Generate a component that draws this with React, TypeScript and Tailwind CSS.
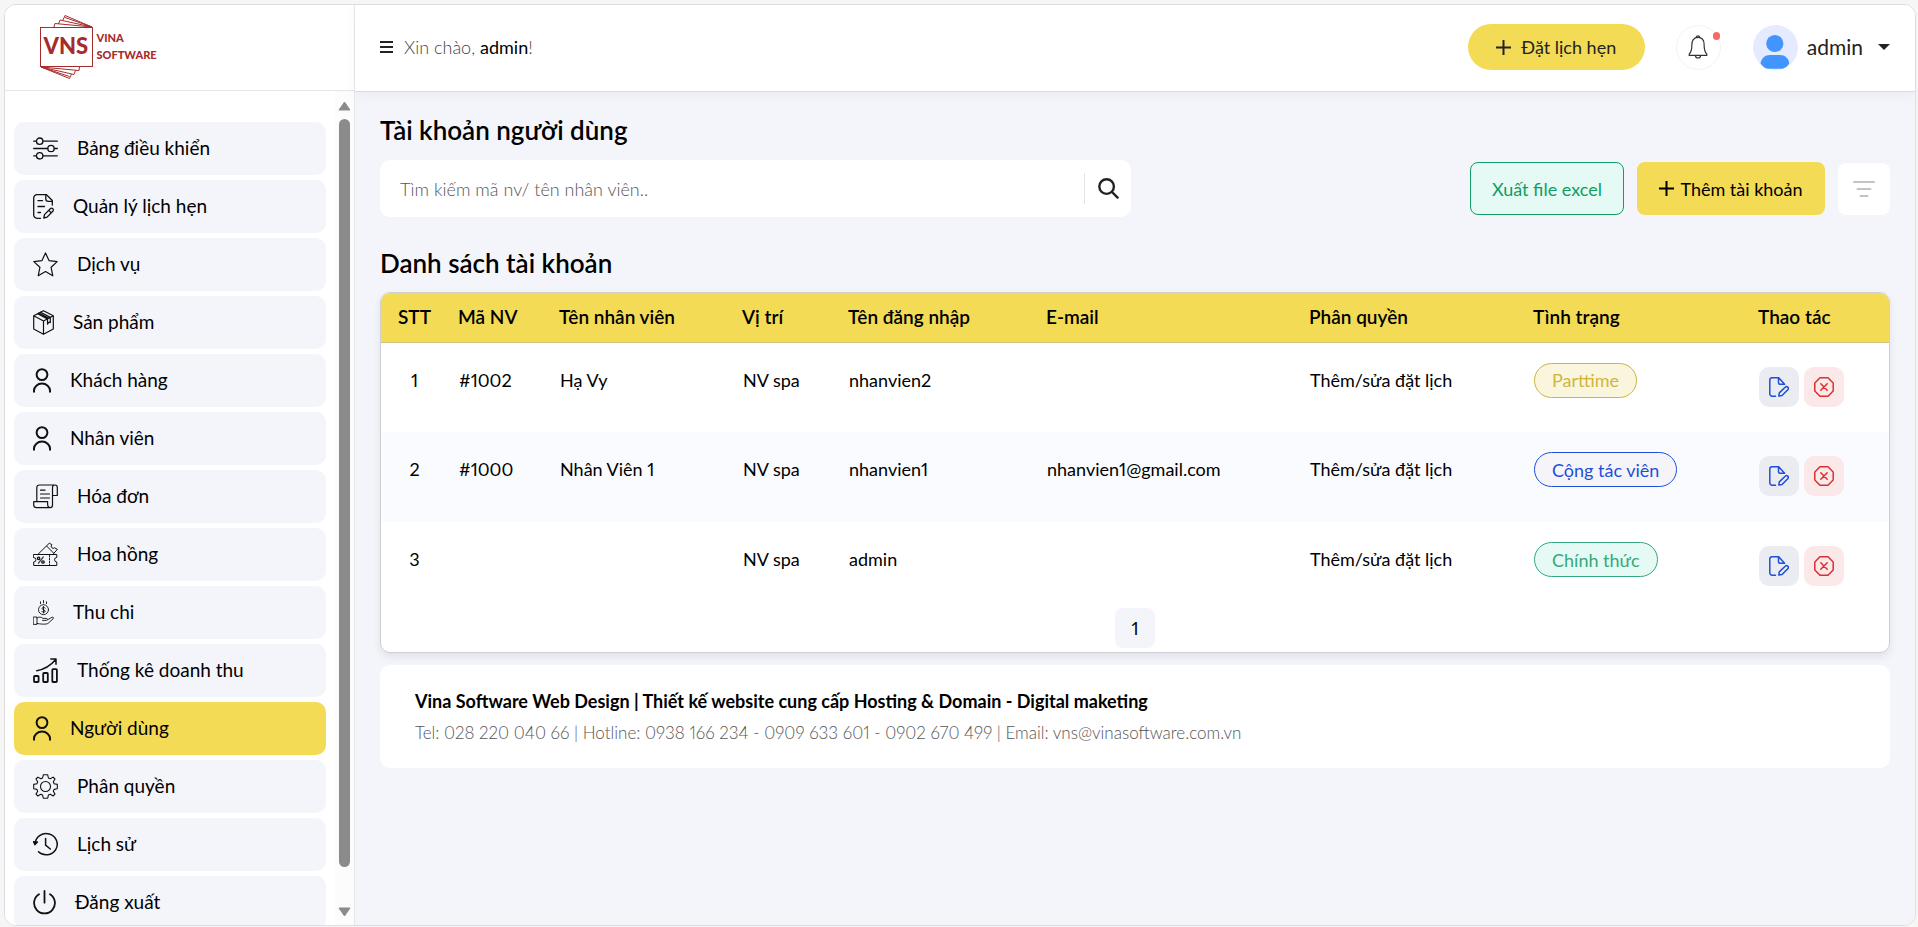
import type { ReactNode } from "react";
import clsx from "clsx";

function Icon({
  w = 25,
  stroke = 1.2,
  children,
}: {
  w?: number;
  stroke?: number;
  children: ReactNode;
}) {
  return (
    <svg
      width={w}
      height={25}
      viewBox={`0 0 ${w} 25`}
      fill="none"
      stroke="#111"
      strokeWidth={stroke}
      strokeLinecap="round"
      strokeLinejoin="round"
      className="shrink-0"
      aria-hidden="true"
    >
      {children}
    </svg>
  );
}

const SlidersIcon = () => (
  <Icon stroke={1.3}>
    <path d="M.7 5.2H3.4M10 5.2H24.3M.7 12.5H14.7M21.3 12.5H24.3M.7 19.8H3.4M10 19.8H24.3" />
    <circle cx="6.7" cy="5.2" r="3.2" />
    <circle cx="18" cy="12.5" r="3.2" />
    <circle cx="6.7" cy="19.8" r="3.2" />
  </Icon>
);

const NoteIcon = () => (
  <Icon w={21} stroke={1.3}>
    <path d="M7.5 24.3H4A3.3 3.3 0 0 1 .7 21V4A3.3 3.3 0 0 1 4 .7H13.5L19.3 6.5V11" />
    <path d="M12.8 .9V5A2.4 2.4 0 0 0 15.2 7.4H19.2" />
    <path d="M5 6.7H9.5M5 12.5H11.5M5 18.5H7.5" />
    <path d="M10.8 24L11.5 20.6L17.3 14.8A1.7 1.7 0 0 1 19.8 17.3L14.1 23.1Z M15.8 16.4L18.2 18.8" />
  </Icon>
);

const StarIcon = () => (
  <Icon>
    <path d="M12.5 .9L16 8.6L24.2 9.6L18.1 15.3L19.8 23.8L12.5 19.6L5.2 23.8L6.9 15.3L.8 9.6L9 8.6Z" />
  </Icon>
);

const BoxIcon = () => (
  <Icon w={21}>
    <path d="M10.5 .7L20.3 5.8V19L10.5 24.3L.7 19V5.8Z M.7 5.8L10.5 11L20.3 5.8M10.5 11V24.3" />
    <path d="M7.6 2.2L17.3 7.4V12.6L16 12L14.5 14.2V8.9L4.6 3.7M5.9 3L15.8 8.2" />
  </Icon>
);

const UserIcon = () => (
  <Icon w={18} stroke={2}>
    <circle cx="9" cy="6.6" r="5.4" />
    <path d="M1 24.5V22.6A8 7 0 0 1 17 22.6V24.5" strokeLinecap="butt" />
  </Icon>
);

const InvoiceIcon = () => (
  <Icon>
    <path d="M3.8 17V3.5A2.5 2.5 0 0 1 6.3 1H22M19.5 21V3.6C19.5 2 20.4 1 22 1S24.3 2 24.3 3.4V11.5H20" />
    <path d="M.7 17.6H14.6V19.8C14.6 22.4 15.5 23.7 17.2 23.7S19.5 22.5 19.5 21M.7 17.6V20.7C.7 22.6 1.7 23.7 3.5 23.7H17" />
    <path d="M7.5 6.2H12M7.5 10H16.5M7.5 14H16.5" />
  </Icon>
);

const CouponIcon = () => (
  <Icon stroke={1}>
    <path d="M.7 12.5H23.8V15.5A2.2 2.2 0 0 0 23.8 20V23.5H.7V20A2.2 2.2 0 0 0 .7 15.5Z" />
    <path d="M5 12.3L16.3 1.2L18.9 2.6A2 2 0 0 0 21.6 5.8L24.4 7.3L20 12.3M13.8 4.2L20.5 11" />
    <path d="M16.5 13.5V23" strokeDasharray="1.5 1.5" />
    <path d="M5.5 21.2L10.3 15" stroke="#444" strokeWidth="1.3" />
    <circle cx="5.6" cy="16.3" r="1.2" strokeWidth="1.3" />
    <circle cx="10" cy="20" r="1.2" strokeWidth="1.3" />
  </Icon>
);

const MoneyIcon = () => (
  <Icon w={21} stroke={0.9}>
    <circle cx="10.5" cy="9.7" r="5" />
    <path d="M12.2 8C11.8 7.3 9 7 9 8.5S12.4 9.6 12.3 11.2S9.2 12.5 8.7 11.4M10.5 6.5V13M10.5 .5V3M7.5 1.8V3.6M13.5 1.8V3.6" />
    <path d="M.6 17H4V24.4H.6ZM4 18C6 16.6 8 16.8 10 18.4H13.3C14.8 18.4 14.8 20.2 13.3 20.4H9.5M14.5 19.8L19 17.3C20.2 16.8 21 17.8 20.1 18.8L15 23.4C13.5 24.6 7 24.2 4 23.4" />
  </Icon>
);

const ChartIcon = () => (
  <Icon stroke={1.8}>
    <rect x="1" y="18" width="4.6" height="6" rx="0.8" />
    <rect x="10.2" y="15" width="4.6" height="9" rx="0.8" />
    <rect x="19.3" y="11.2" width="4.6" height="12.8" rx="0.8" />
    <path d="M3.8 12.7C11.5 11.4 17.5 7.8 22.5 1.8M17.8 1H23V6.2" strokeWidth="1.5" />
  </Icon>
);

const GearIcon = () => (
  <Icon stroke={1.1}>
    <circle cx="12.5" cy="12.5" r="5" />
    <path d="M10.3 .8H14.7L15.4 4L17.3 4.8L20.1 3.1L22 5L20.3 7.8L21.1 9.7L24.3 10.4V14.7L21.1 15.4L20.3 17.3L22 20.1L20.1 22L17.3 20.3L15.4 21.1L14.7 24.2H10.3L9.6 21.1L7.7 20.3L4.9 22L3 20.1L4.7 17.3L3.9 15.4L.7 14.7V10.4L3.9 9.7L4.7 7.8L3 5L4.9 3.1L7.7 4.8L9.6 4Z" />
  </Icon>
);

const HistoryIcon = () => (
  <Icon stroke={1.5}>
    <path d="M2.2 12A11 10.6 0 1 1 5.5 19.8" />
    <path d="M.6 9.7L4.4 10.1L2 12.6Z" fill="#111" />
    <path d="M12.6 6.5V13.2L17.3 17" />
  </Icon>
);

const PowerIcon = () => (
  <Icon w={23} stroke={1.8}>
    <path d="M6 4.2A10.4 10.4 0 1 0 17 4.2M11.5 1V12.7" />
  </Icon>
);

const menu: { label: string; icon: () => ReactNode; active?: boolean }[] = [
  { label: "Bảng điều khiển", icon: SlidersIcon },
  { label: "Quản lý lịch hẹn", icon: NoteIcon },
  { label: "Dịch vụ", icon: StarIcon },
  { label: "Sản phẩm", icon: BoxIcon },
  { label: "Khách hàng", icon: UserIcon },
  { label: "Nhân viên", icon: UserIcon },
  { label: "Hóa đơn", icon: InvoiceIcon },
  { label: "Hoa hồng", icon: CouponIcon },
  { label: "Thu chi", icon: MoneyIcon },
  { label: "Thống kê doanh thu", icon: ChartIcon },
  { label: "Người dùng", icon: UserIcon, active: true },
  { label: "Phân quyền", icon: GearIcon },
  { label: "Lịch sử", icon: HistoryIcon },
  { label: "Đăng xuất", icon: PowerIcon },
];

const statusStyles = {
  parttime: "border-[#cfb53b] bg-[#faf5dd] text-[#cfb53b]",
  collab: "border-[#1f4fd8] bg-[#f5f5f9] text-[#1f4fd8]",
  official: "border-[#34a87a] bg-[#e6faf5] text-[#34a87a]",
};

const accounts = [
  {
    code: "#1002",
    name: "Hạ Vy",
    position: "NV spa",
    username: "nhanvien2",
    email: "",
    role: "Thêm/sửa đặt lịch",
    status: "Parttime",
    tone: statusStyles.parttime,
  },
  {
    code: "#1000",
    name: "Nhân Viên 1",
    position: "NV spa",
    username: "nhanvien1",
    email: "nhanvien1@gmail.com",
    role: "Thêm/sửa đặt lịch",
    status: "Cộng tác viên",
    tone: statusStyles.collab,
  },
  {
    code: "",
    name: "",
    position: "NV spa",
    username: "admin",
    email: "",
    role: "Thêm/sửa đặt lịch",
    status: "Chính thức",
    tone: statusStyles.official,
  },
];

const columns = [
  { label: "STT", width: "w-[67px]" },
  { label: "Mã NV", width: "w-[101px]" },
  { label: "Tên nhân viên", width: "w-[183px]" },
  { label: "Vị trí", width: "w-[106px]" },
  { label: "Tên đăng nhập", width: "w-[198px]" },
  { label: "E-mail", width: "w-[263px]" },
  { label: "Phân quyền", width: "w-[224px]" },
  { label: "Tình trạng", width: "w-[225px]" },
  { label: "Thao tác", width: "w-[141px]" },
];

function Logo() {
  return (
    <svg width="120" height="68" viewBox="0 0 120 68" role="img" aria-label="Vina Software">
      <g fill="none" stroke="#a82b2b" strokeWidth="1">
        <rect x="0.5" y="13.5" width="52" height="39" />
        <path d="M52 13L25 1.5L23 6M52 13L20 6L18.5 10M52 13L15 9.5L14 13M25 3.5L52 13" />
        <path d="M1 53L29.5 64.5L31.5 60M1 53L34 60.5L35.5 56.5M1 53L39 56.5L39.5 53M1 53L29.5 62.5" />
      </g>
      <g fill="#a82b2b" fontFamily="Lato, sans-serif" fontWeight="900">
        <text x="3.5" y="40" fontSize="22">
          VNS
        </text>
        <text x="56.5" y="28" fontSize="11">
          VINA
        </text>
        <text x="56.5" y="45" fontSize="11">
          SOFTWARE
        </text>
      </g>
    </svg>
  );
}

function Plus() {
  return (
    <svg width="15" height="15" viewBox="0 0 15 15" stroke="currentColor" strokeWidth="2" aria-hidden="true">
      <path d="M0.5 7.5H14.5M7.5 0.5V14.5" strokeLinecap="round" />
    </svg>
  );
}

function Sidebar() {
  return (
    <aside className="flex w-[350px] shrink-0 flex-col border-r border-[#e6e6e6] bg-white">
      <div className="h-[86px] shrink-0 border-b border-[#e6e6e6] pt-[9px] pl-[35px]">
        <a href="#" className="inline-block">
          <Logo />
        </a>
      </div>
      <div className="flex min-h-0 flex-1">
        <nav className="flex min-w-0 flex-1 flex-col gap-[5px] overflow-hidden pt-[31px] pr-[9px] pl-[9px]">
          {menu.map((item) => (
            <a
              key={item.label}
              href="#"
              className={clsx(
                "flex h-[53px] shrink-0 items-center gap-[19px] rounded-[10px] pl-[19px] text-[19px] text-black",
                item.active ? "bg-[#f3db56]" : "bg-[#f4f5fb]",
              )}
            >
              <item.icon />
              {item.label}
            </a>
          ))}
        </nav>
        {/* Scrollbar */}
        <div className="flex w-[19px] shrink-0 flex-col items-center bg-[#fcfcfc] pt-2.5 pb-2">
          <svg width="13" height="10" viewBox="0 0 13 10" fill="#8b8b8b" stroke="#8b8b8b" strokeLinejoin="round">
            <path d="M6.5 1L12 9H1Z" />
          </svg>
          <div className="mt-2 mb-10 w-[11px] flex-1 rounded-full bg-[#8b8b8b]" />
          <svg width="13" height="10" viewBox="0 0 13 10" fill="#8b8b8b" stroke="#8b8b8b" strokeLinejoin="round">
            <path d="M6.5 9L12 1H1Z" />
          </svg>
        </div>
      </div>
    </aside>
  );
}

function Header() {
  return (
    <header className="flex h-[87px] shrink-0 items-center border-b border-[#dcdce0] bg-white px-[25px] pb-0.5 shadow-[0_4px_12px_rgba(0,0,0,0.04)]">
      <button type="button" aria-label="Menu" className="mr-[11px]">
        <svg width="13" height="12" viewBox="0 0 13 12" stroke="#222" strokeWidth="2">
          <path d="M0 1H13M0 6H13M0 11H13" />
        </svg>
      </button>
      <p className="text-lg font-light text-[#444]">
        Xin chào, <span className="font-normal text-black">admin</span>!
      </p>
      <div className="ml-auto flex items-center">
        <button
          type="button"
          className="flex h-[46px] w-[177px] items-center justify-center gap-2.5 rounded-full bg-[#f3db56] text-lg text-[#222]"
        >
          <Plus />
          Đặt lịch hẹn
        </button>
        <button
          type="button"
          aria-label="Thông báo"
          className="relative ml-[31px] flex size-[45px] items-center justify-center rounded-full border border-[#f3f3f5]"
        >
          <svg width="20" height="24" viewBox="0 0 20 24" fill="none" stroke="#333" strokeWidth="1.2" strokeLinejoin="round">
            <path d="M10 2.4C5.5 2.4 3.9 6 3.9 9.5C3.9 15 3.3 17 1.2 19.2V20.4H18.8V19.2C16.7 17 16.1 15 16.1 9.5C16.1 6 14.5 2.4 10 2.4Z" />
            <path d="M8.4 2.5C8.2 .3 11.8 .3 11.6 2.5M7.4 20.6C7.8 23.8 12.2 23.8 12.6 20.6" />
          </svg>
          <span className="absolute top-1.5 right-0 h-2 w-[7px] rounded-full bg-[#f96868]" />
        </button>
        <button type="button" className="ml-8 flex items-center text-[21px] text-[#222]">
          <svg width="45" height="45" viewBox="0 0 45 45" aria-hidden="true">
            <circle cx="22.5" cy="22.5" r="22.5" fill="#e4eaff" />
            <circle cx="21.8" cy="18.5" r="8.6" fill="#4294ff" />
            <path d="M7.5 38.5C8.5 33 12 30 17 30H27C32 30 35.5 33 36.3 38.5C33.5 42.5 31 43.7 28 43.7H15.5C12.5 43.7 10 42 7.5 38.5Z" fill="#4294ff" />
          </svg>
          <span className="ml-[9px]">admin</span>
          <svg width="12" height="6" viewBox="0 0 12 6" className="ml-[15px]" fill="#222">
            <path d="M0 0H12L6 6Z" />
          </svg>
        </button>
      </div>
    </header>
  );
}

function RowActions() {
  return (
    <div className="flex gap-[5px]">
      <button
        type="button"
        aria-label="Sửa"
        className="flex size-10 items-center justify-center rounded-[10px] bg-[#ebecf2]"
      >
        <svg width="20" height="20" viewBox="0 0 20 20" fill="none" stroke="#1f4fd8" strokeWidth="1.5" strokeLinejoin="round" strokeLinecap="round">
          <path d="M6.5 19.2H3.2A2.4 2.4 0 0 1 .8 16.8V3.2A2.4 2.4 0 0 1 3.2 .8H9.7L15.6 7.3H11A1.5 1.5 0 0 1 9.5 5.8V1" />
          <path d="M9.8 19.1L10.3 15.9L16.2 10.2A1.8 1.8 0 0 1 18.8 12.7L13 18.5Z" />
        </svg>
      </button>
      <button
        type="button"
        aria-label="Xóa"
        className="flex size-10 items-center justify-center rounded-[10px] bg-[#fbe8e8]"
      >
        <svg width="20" height="20" viewBox="0 0 20 20" fill="none" stroke="#dc3030" strokeWidth="1.5" strokeLinejoin="round" strokeLinecap="round">
          <path d="M6 .8H14L19.2 6V14L14 19.2H6L.8 14V6Z M6.8 6.8L13.2 13.2M13.2 6.8L6.8 13.2" />
        </svg>
      </button>
    </div>
  );
}

function AccountTable() {
  return (
    <div className="mt-[11px] overflow-hidden rounded-[10px] border border-[#cfcfd4] bg-white shadow-[0_4px_8px_rgba(0,0,0,0.08)]">
      <table className="w-full table-fixed text-left text-lg text-black">
        <thead>
          <tr className="h-[49px] border-b border-[#cfc27a] bg-[#f3db56] text-[19px]">
            {columns.map((col, i) => (
              <th
                key={col.label}
                className={clsx("font-semibold", col.width, i === 0 ? "text-center" : "pl-2.5")}
              >
                {col.label}
              </th>
            ))}
          </tr>
        </thead>
        <tbody>
          {accounts.map((acc, i) => (
            <tr key={acc.username} className="h-[90px] align-top last:h-[86px] even:bg-[#fafbff]">
              <td className="pt-[23px] text-center">{i + 1}</td>
              <td className="pt-[23px] pl-[11px]">{acc.code}</td>
              <td className="pt-[23px] pl-[11px]">{acc.name}</td>
              <td className="pt-[23px] pl-[11px]">{acc.position}</td>
              <td className="pt-[23px] pl-[11px]">{acc.username}</td>
              <td className="pt-[23px] pl-[11px]">{acc.email}</td>
              <td className="pt-[23px] pl-[11px]">{acc.role}</td>
              <td className="pt-5 pl-[11px]">
                <span
                  className={clsx(
                    "inline-flex h-[35px] items-center rounded-full border px-[17px]",
                    acc.tone,
                  )}
                >
                  {acc.status}
                </span>
              </td>
              <td className="pt-6 pl-[11px]">
                <RowActions />
              </td>
            </tr>
          ))}
        </tbody>
      </table>
      <div className="flex justify-center pb-1">
        <button type="button" className="size-10 rounded-lg bg-[#f4f5fb] text-lg text-black">
          1
        </button>
      </div>
    </div>
  );
}

export default function App() {
  return (
    <div className="h-screen bg-[#f6f6f6] pt-1 pr-0.5 pb-px pl-1 font-[Lato,'Noto_Sans',sans-serif] proportional-nums">
      <div className="flex h-full overflow-hidden rounded-xl border border-[#dedee2]">
        <Sidebar />
        <div className="flex min-w-0 flex-1 flex-col bg-[#f4f5fb]">
          <Header />
          <main className="flex-1 px-[25px] pt-5">
            <h1 className="text-[26px] leading-9 font-semibold text-black">Tài khoản người dùng</h1>
            <div className="mt-3 flex items-center gap-[13px]">
              <form className="mr-auto flex h-[57px] w-[calc(50%-4px)] items-center rounded-[10px] bg-white">
                <input
                  type="text"
                  aria-label="Tìm kiếm"
                  placeholder="Tìm kiếm mã nv/ tên nhân viên.."
                  className="h-full min-w-0 flex-1 bg-transparent pl-5 text-lg font-light text-black outline-none placeholder:text-[#555]"
                />
                <button
                  type="button"
                  aria-label="Tìm"
                  className="flex h-[31px] w-[47px] items-center justify-center border-l border-[#e3e3e6]"
                >
                  <svg width="21" height="21" viewBox="0 0 21 21" fill="none" stroke="#222" strokeWidth="2.4" strokeLinecap="round">
                    <circle cx="8.6" cy="8.6" r="7.3" />
                    <path d="M14 14L19.6 19.6" />
                  </svg>
                </button>
              </form>
              <button
                type="button"
                className="h-[53px] w-[154px] rounded-lg border border-[#0f9d65] bg-[#e6faf5] text-lg text-[#0f9d65]"
              >
                Xuất file excel
              </button>
              <button
                type="button"
                className="flex h-[53px] w-[188px] items-center justify-center gap-1.5 rounded-lg bg-[#f3db56] text-lg text-black"
              >
                <Plus />
                Thêm tài khoản
              </button>
              <button
                type="button"
                aria-label="Lọc"
                className="flex size-[52px] items-center justify-center rounded-lg bg-white"
              >
                <svg width="22" height="16" viewBox="0 0 22 16" stroke="#c4c4c4" strokeWidth="2" strokeLinecap="round">
                  <path d="M1 1H21M4.5 8H17.5M7.5 15H14.5" />
                </svg>
              </button>
            </div>
            <h2 className="mt-7 text-[26px] leading-9 font-semibold text-black">
              Danh sách tài khoản
            </h2>
            <AccountTable />
            <footer className="mt-3 rounded-[10px] bg-white px-[35px] pt-[21px] pb-5 text-lg leading-[31px] text-black">
              <p className="font-bold">
                Vina Software Web Design | Thiết kế website cung cấp Hosting &amp; Domain - Digital
                maketing
              </p>
              <p className="text-[17px] font-light text-[#555]">
                Tel: 028 220 040 66 | Hotline: 0938 166 234 - 0909 633 601 - 0902 670 499 | Email:
                vns@vinasoftware.com.vn
              </p>
            </footer>
          </main>
        </div>
      </div>
    </div>
  );
}
